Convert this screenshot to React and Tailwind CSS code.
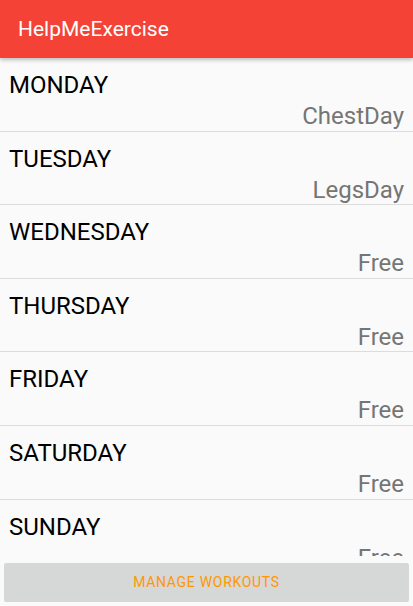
const days = [
  { day: "MONDAY", plan: "ChestDay" },
  { day: "TUESDAY", plan: "LegsDay" },
  { day: "WEDNESDAY", plan: "Free" },
  { day: "THURSDAY", plan: "Free" },
  { day: "FRIDAY", plan: "Free" },
  { day: "SATURDAY", plan: "Free" },
  { day: "SUNDAY", plan: "Free" },
];

const DayRow = ({ day, plan }) => (
  <div className="shrink-0 h-[73.6px] box-border border-b border-[#dcdcdc] flex flex-col px-[9px] pt-[13px]">
    <div className="text-[24px] leading-[28px] text-black">{day}</div>
    <div className="mt-[3px] text-[24px] leading-[28px] text-[#757575] text-right">{plan}</div>
  </div>
);

const App = () => {
  return (
    <div className="h-[606px] w-full flex flex-col bg-[#fafafa] font-['Roboto',sans-serif] overflow-hidden">
      <div className="h-[58px] shrink-0 bg-[#f44336] flex items-center px-[18px] pt-[1px] shadow-[0_2px_4px_rgba(0,0,0,0.25)] z-10">
        <h1 className="text-[21px] text-white">HelpMeExercise</h1>
      </div>

      <div className="flex-1 flex flex-col overflow-hidden">
        {days.map((d) => (
          <DayRow key={d.day} {...d} />
        ))}
      </div>

      <div className="shrink-0 px-[4px] pt-[7px] pb-[4px]">
        <button className="w-full h-[39px] rounded-[2px] bg-[#d6d7d7] text-[14px] text-[#ff9800] tracking-[0.7px]">
          MANAGE WORKOUTS
        </button>
      </div>
    </div>
  );
};

export default App;
